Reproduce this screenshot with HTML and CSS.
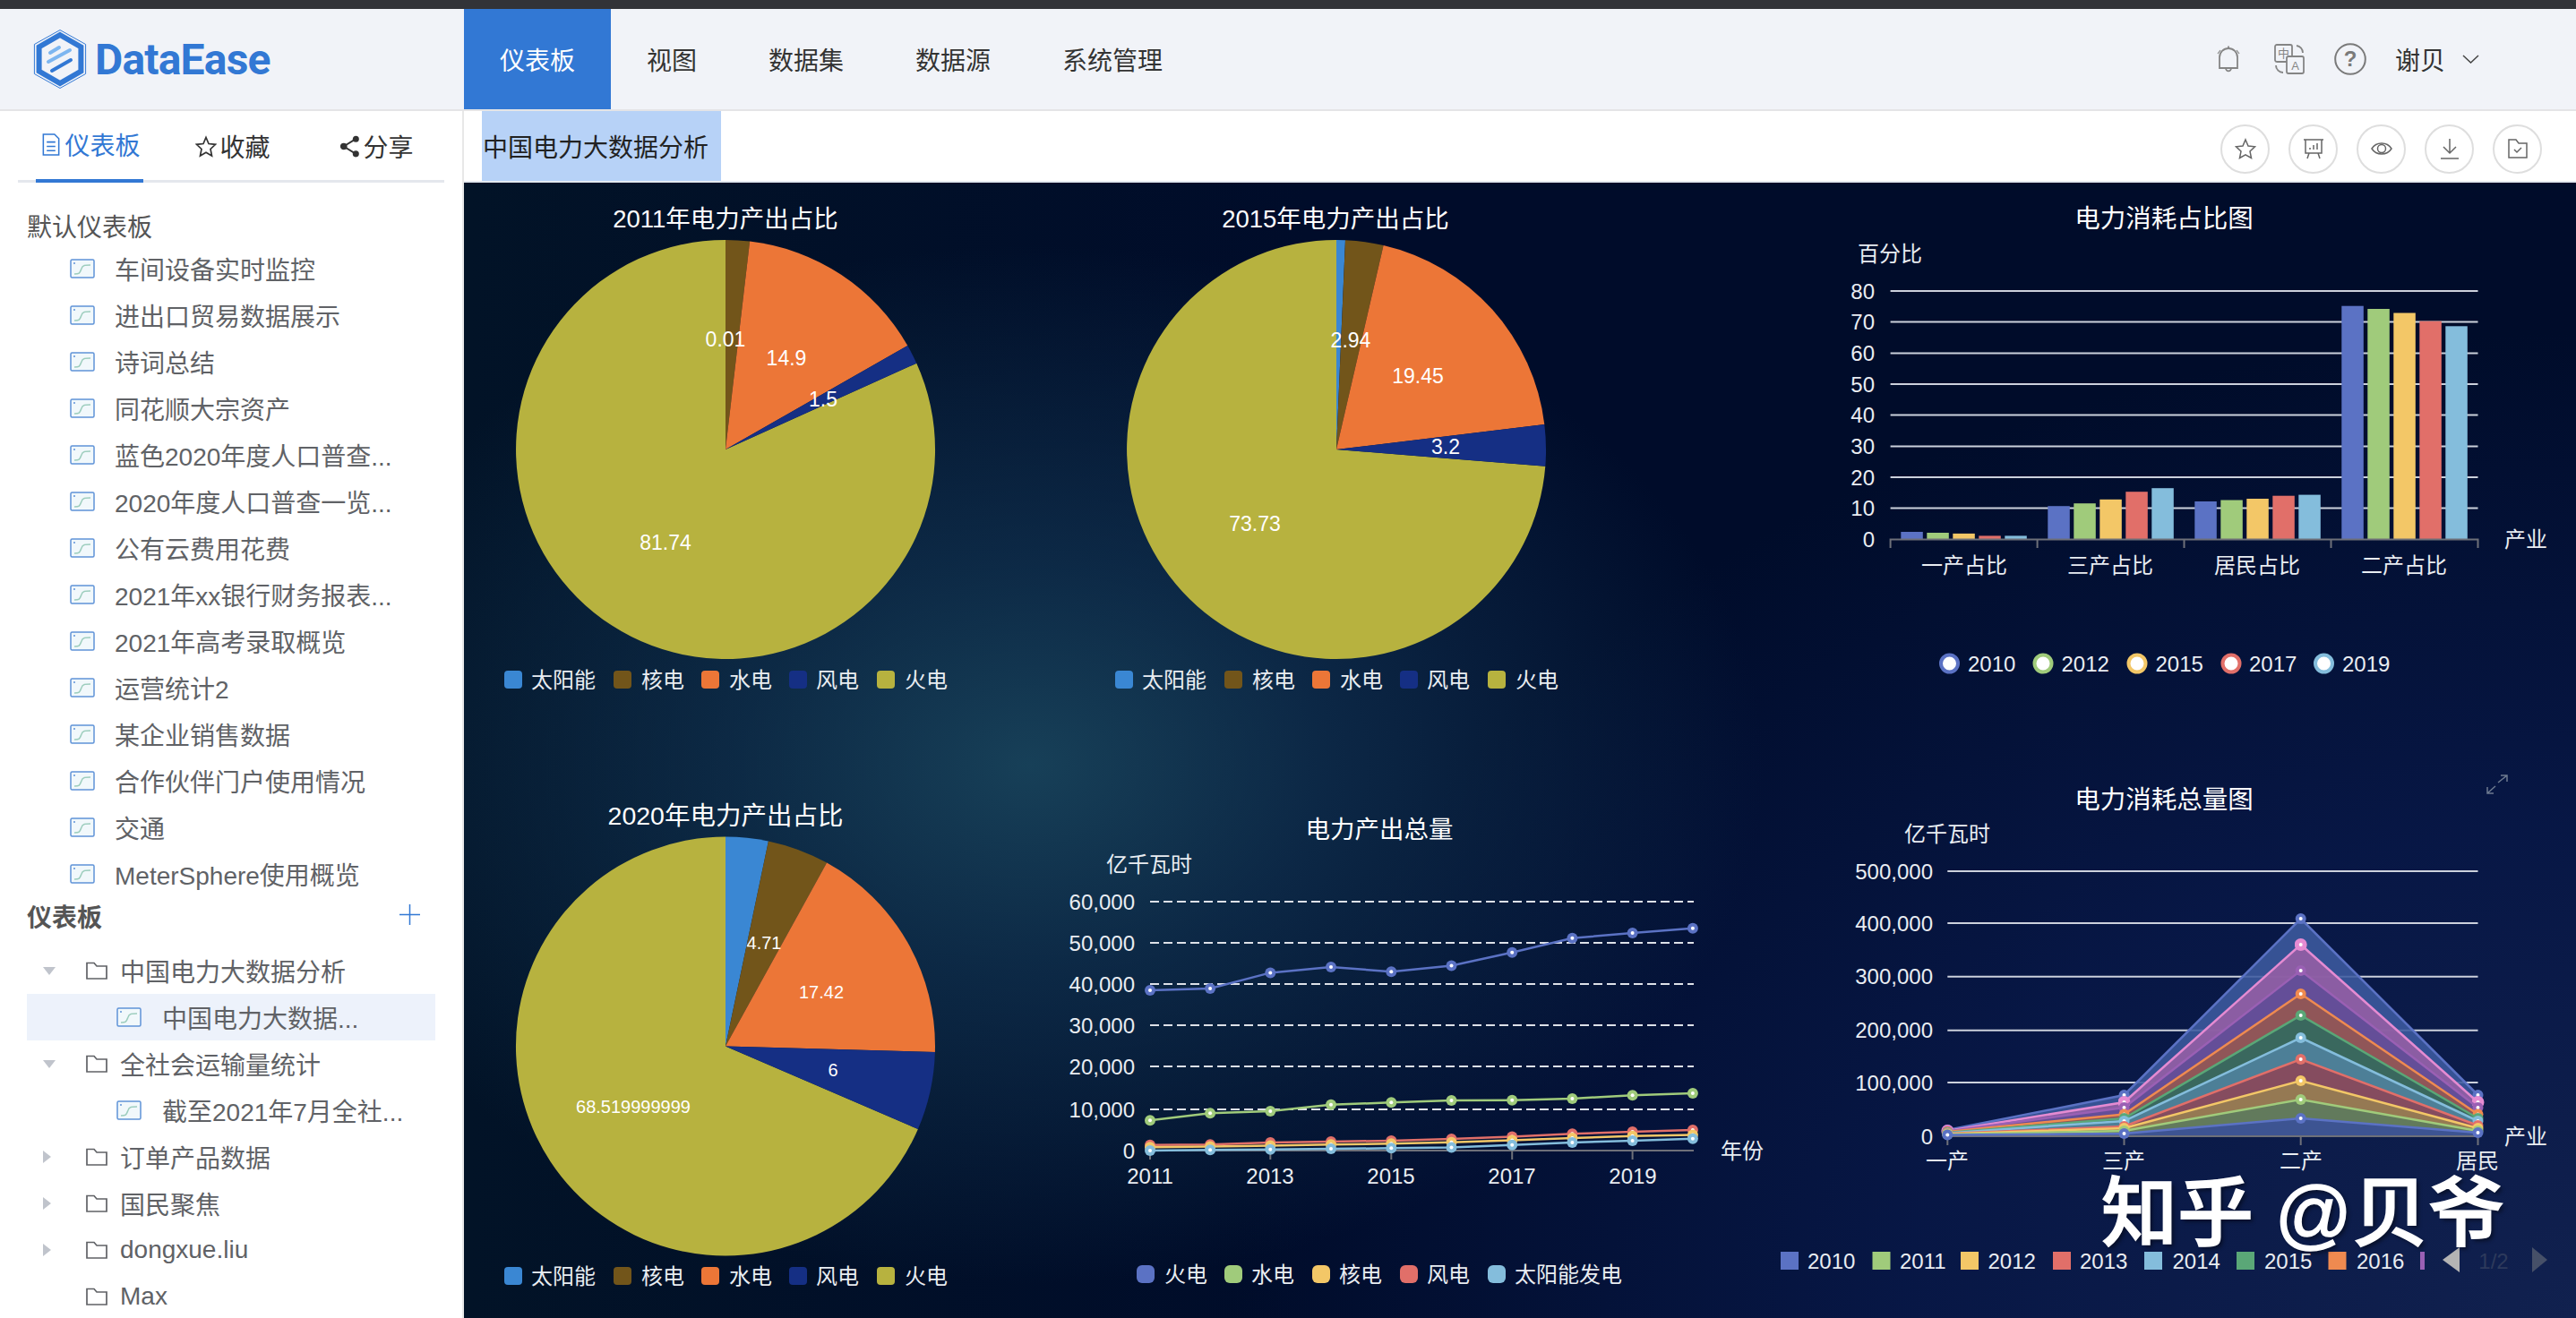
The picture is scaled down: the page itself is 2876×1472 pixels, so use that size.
FILE: index.html
```html
<!DOCTYPE html>
<html>
	<head>
		<title>DataEase</title>
		<meta charset="UTF-8">
		<link rel="stylesheet" href="styles.css">
	</head>
	<body>
		<!-- shared icons -->
		<svg class="defs">
			<symbol id="i-chart" viewBox="0 0 28 22">
				<rect x="1" y="1" width="26" height="20" rx="1.5" fill="#f1f8fb" stroke="#5f93d8" stroke-width="1.5"/>
				<path d="M5 17 C11 17 11 16 13 11 C14 7 17 7 23 7" fill="none" stroke="#9ccdbd" stroke-width="1.5"/>
				<circle cx="5" cy="5" r="1" fill="#5f93d8"/>
			</symbol>
			<symbol id="i-folder" viewBox="0 0 24 20">
				<path d="M1 19 V1.5 H9 L12 5 H23 V19 Z" fill="none" stroke="#606266" stroke-width="1.7"/>
			</symbol>
			<marker id="m-blue" class="pt" viewBox="-7 -7 14 14" markerWidth="14" markerHeight="14" markerUnits="userSpaceOnUse"><circle r="6" fill="#5b72c4"/><circle r="2" fill="#fff"/></marker>
			<marker id="m-green" viewBox="-7 -7 14 14" markerWidth="14" markerHeight="14" markerUnits="userSpaceOnUse"><circle r="6" fill="#a0cb7b"/><circle r="2" fill="#fff"/></marker>
			<marker id="m-yellow" viewBox="-7 -7 14 14" markerWidth="14" markerHeight="14" markerUnits="userSpaceOnUse"><circle r="6" fill="#f3c767"/><circle r="2" fill="#fff"/></marker>
			<marker id="m-red" viewBox="-7 -7 14 14" markerWidth="14" markerHeight="14" markerUnits="userSpaceOnUse"><circle r="6" fill="#e16f69"/><circle r="2" fill="#fff"/></marker>
			<marker id="m-sky" viewBox="-7 -7 14 14" markerWidth="14" markerHeight="14" markerUnits="userSpaceOnUse"><circle r="6" fill="#84bddc"/><circle r="2" fill="#fff"/></marker>
			<marker id="m-dgreen" viewBox="-7 -7 14 14" markerWidth="14" markerHeight="14" markerUnits="userSpaceOnUse"><circle r="6" fill="#5aa777"/><circle r="2" fill="#fff"/></marker>
			<marker id="m-orange" viewBox="-7 -7 14 14" markerWidth="14" markerHeight="14" markerUnits="userSpaceOnUse"><circle r="6" fill="#ef8a50"/><circle r="2" fill="#fff"/></marker>
			<marker id="m-purple" viewBox="-7 -7 14 14" markerWidth="14" markerHeight="14" markerUnits="userSpaceOnUse"><circle r="6" fill="#9a60b4"/><circle r="2" fill="#fff"/></marker>
			<marker id="m-pink" viewBox="-7 -7 14 14" markerWidth="14" markerHeight="14" markerUnits="userSpaceOnUse"><circle r="7" fill="#e58bd2"/><circle r="2" fill="#fff"/></marker>
		</svg>

		<div class="topstrip"></div>
		<header class="navbar">
			<div class="logo">
				<svg class="logo-mark" viewBox="0 0 60 66">
					<polygon points="30,0.5 58.6,16.5 58.6,49.5 30,65.5 1.4,49.5 1.4,16.5" fill="none" stroke="#3278d4" stroke-width="1"/>
					<polygon points="30,6 53.4,19.5 53.4,46.5 30,60 6.6,46.5 6.6,19.5" fill="none" stroke="#3278d4" stroke-width="6"/>
					<path d="M19 26 L29 20" stroke="#7db6f0" stroke-width="4" stroke-linecap="round"/>
					<path d="M17 36 L41 23" stroke="#7db6f0" stroke-width="4" stroke-linecap="round"/>
					<path d="M21 46 L42 34" stroke="#3278d4" stroke-width="4" stroke-linecap="round"/>
				</svg>
				<span class="logo-text">DataEase</span>
			</div>
			<nav class="menu">
				<a class="menu-item active">仪表板</a>
				<a class="menu-item">视图</a>
				<a class="menu-item">数据集</a>
				<a class="menu-item">数据源</a>
				<a class="menu-item">系统管理</a>
			</nav>
			<div class="nav-right">
				<svg class="ic-bell" viewBox="0 0 26 30" fill="none" stroke="#858585" stroke-width="1.8">
					<path d="M3 25 V13 a10 10 0 0 1 20 0 V25 Z"/>
					<path d="M10 25 a3 3.4 0 0 0 6 0"/>
					<path d="M13 3 V0.5"/>
					<path d="M1 9 L4 5 M25 9 L22 5" stroke-width="1.2"/>
				</svg>
				<svg class="ic-lang" viewBox="0 0 34 34" fill="none" stroke="#858585" stroke-width="1.8">
					<rect x="1" y="1" width="19" height="19" rx="2"/>
					<rect x="14" y="14" width="19" height="19" rx="2" fill="#f1f3f8"/>
					<path d="M25 2 a8 8 0 0 1 7 8 M2 24 a8 8 0 0 0 8 8"/>
					<text x="10.5" y="15" class="ic-glyph">中</text>
					<text x="23.5" y="29" class="ic-glyph">A</text>
				</svg>
				<svg class="ic-help" viewBox="0 0 36 36" fill="none" stroke="#7a7a7a" stroke-width="2">
					<circle cx="18" cy="18" r="16.8"/>
					<text x="18" y="26" class="ic-help-mark">?</text>
				</svg>
				<span class="user">谢贝</span>
				<svg class="ic-chevron" viewBox="0 0 19 10" fill="none" stroke="#444" stroke-width="1.5">
					<path d="M1 1 L9.500 9 L18 1"/>
				</svg>
			</div>
		</header>

		<div class="main">
			<aside class="sidebar">
				<div class="tabs">
					<div class="tab active">
						<svg class="tab-icon" viewBox="0 0 22 26" fill="none" stroke="#3278d4" stroke-width="1.6">
							<path d="M2 1 H15 L20 6 V25 H2 Z"/>
							<path d="M6 10 H16 M6 15 H16 M6 20 H16"/>
						</svg>
						仪表板
					</div>
					<div class="tab">
						<svg class="tab-icon" viewBox="0 0 24 24" fill="none" stroke="#333" stroke-width="1.7">
							<path d="M12 2 L15 9 L22.500 9.800 L17 15 L18.500 22.500 L12 18.800 L5.500 22.500 L7 15 L1.500 9.800 L9 9 Z"/>
						</svg>
						收藏
					</div>
					<div class="tab">
						<svg class="tab-icon" viewBox="0 0 22 24" fill="#333" stroke="#333" stroke-width="1.800">
							<path d="M18 4 L5 12 L18 20" fill="none"/>
							<circle cx="18" cy="4" r="2.500"/><circle cx="5" cy="12" r="2.800"/><circle cx="18" cy="20" r="2.500"/>
						</svg>
						分享
					</div>
				</div>

				<div class="group-title default-title">默认仪表板</div>
				<div class="row lvl1"><svg class="ic-file"><use href="#i-chart"/></svg><span>车间设备实时监控</span></div>
				<div class="row lvl1"><svg class="ic-file"><use href="#i-chart"/></svg><span>进出口贸易数据展示</span></div>
				<div class="row lvl1"><svg class="ic-file"><use href="#i-chart"/></svg><span>诗词总结</span></div>
				<div class="row lvl1"><svg class="ic-file"><use href="#i-chart"/></svg><span>同花顺大宗资产</span></div>
				<div class="row lvl1"><svg class="ic-file"><use href="#i-chart"/></svg><span>蓝色2020年度人口普查...</span></div>
				<div class="row lvl1"><svg class="ic-file"><use href="#i-chart"/></svg><span>2020年度人口普查一览...</span></div>
				<div class="row lvl1"><svg class="ic-file"><use href="#i-chart"/></svg><span>公有云费用花费</span></div>
				<div class="row lvl1"><svg class="ic-file"><use href="#i-chart"/></svg><span>2021年xx银行财务报表...</span></div>
				<div class="row lvl1"><svg class="ic-file"><use href="#i-chart"/></svg><span>2021年高考录取概览</span></div>
				<div class="row lvl1"><svg class="ic-file"><use href="#i-chart"/></svg><span>运营统计2</span></div>
				<div class="row lvl1"><svg class="ic-file"><use href="#i-chart"/></svg><span>某企业销售数据</span></div>
				<div class="row lvl1"><svg class="ic-file"><use href="#i-chart"/></svg><span>合作伙伴门户使用情况</span></div>
				<div class="row lvl1"><svg class="ic-file"><use href="#i-chart"/></svg><span>交通</span></div>
				<div class="row lvl1"><svg class="ic-file"><use href="#i-chart"/></svg><span>MeterSphere使用概览</span></div>

				<div class="group-title dash-title">
					<b>仪表板</b>
					<svg class="ic-plus" viewBox="0 0 23 23" stroke="#3278d4" stroke-width="1.5"><path d="M11.500 0 V23 M0 11.500 H23"/></svg>
				</div>
				<div class="tree">
					<div class="row folder"><i class="caret down"></i><svg class="ic-folder"><use href="#i-folder"/></svg><span>中国电力大数据分析</span></div>
					<div class="row sub selected"><svg class="ic-file"><use href="#i-chart"/></svg><span>中国电力大数据...</span></div>
					<div class="row folder"><i class="caret down"></i><svg class="ic-folder"><use href="#i-folder"/></svg><span>全社会运输量统计</span></div>
					<div class="row sub"><svg class="ic-file"><use href="#i-chart"/></svg><span>截至2021年7月全社...</span></div>
					<div class="row folder"><i class="caret"></i><svg class="ic-folder"><use href="#i-folder"/></svg><span>订单产品数据</span></div>
					<div class="row folder"><i class="caret"></i><svg class="ic-folder"><use href="#i-folder"/></svg><span>国民聚焦</span></div>
					<div class="row folder"><i class="caret"></i><svg class="ic-folder"><use href="#i-folder"/></svg><span>dongxue.liu</span></div>
					<div class="row folder"><i class="caret none"></i><svg class="ic-folder"><use href="#i-folder"/></svg><span>Max</span></div>
				</div>
			</aside>

			<section class="content">
				<div class="titlebar">
					<div class="title-tab">中国电力大数据分析</div>
					<div class="actions">
						<div class="action">
							<svg viewBox="0 0 24 24" fill="none" stroke="#666" stroke-width="1.500"><path d="M12 2 L15 9 L22.500 9.800 L17 15 L18.500 22.500 L12 18.800 L5.500 22.500 L7 15 L1.500 9.800 L9 9 Z"/></svg>
						</div>
						<div class="action">
							<svg viewBox="0 0 24 24" fill="none" stroke="#666" stroke-width="1.500"><path d="M1 2 H23 M3 2 V17 H21 V2 M7 17 L5 23 M17 17 L19 23"/><path d="M8 13 V11 M12 13 V8 M16 13 V6"/></svg>
						</div>
						<div class="action">
							<svg viewBox="0 0 24 24" fill="none" stroke="#666" stroke-width="1.500"><path d="M1 12 C6 4 18 4 23 12 C18 20 6 20 1 12 Z"/><circle cx="12" cy="12" r="4.500"/></svg>
						</div>
						<div class="action">
							<svg viewBox="0 0 24 24" fill="none" stroke="#666" stroke-width="1.500"><path d="M12 1 V16 M5 10 L12 17 L19 10 M2 23 H22"/></svg>
						</div>
						<div class="action">
							<svg viewBox="0 0 24 24" fill="none" stroke="#666" stroke-width="1.500"><path d="M2 22 V2 H10 L13 6 H22 V22 Z"/><path d="M8 13 L11 16 L16 11"/></svg>
						</div>
					</div>
				</div>

				<div class="dashboard">
					<!-- 2011 pie -->
					<svg class="chart" viewBox="518 204 632 636">
						<text class="c-title" x="810" y="244">2011年电力产出占比</text>
						<path fill="#b7b23f" d="M810 502 L1023.300 405.700 A234 234 0 1 1 810 268 Z"/>
						<path fill="#72551a" d="M810 502 L810 268 A234 234 0 0 1 837.100 269.600 Z"/>
						<path fill="#ec7637" d="M810 502 L837.100 269.600 A234 234 0 0 1 1013.300 386.100 Z"/>
						<path fill="#152f84" d="M810 502 L1013.300 386.100 A234 234 0 0 1 1023.300 405.700 Z"/>
						<g class="c-pielabel">
							<text x="810" y="379">0.01</text>
							<text x="878" y="400">14.9</text>
							<text x="919" y="446">1.5</text>
							<text x="743" y="606">81.74</text>
						</g>
						<g class="c-legend">
							<rect x="563" y="749" width="20" height="20" rx="4" fill="#3a87d3"/><text x="593" y="759">太阳能</text>
							<rect x="685" y="749" width="20" height="20" rx="4" fill="#72551a"/><text x="716" y="759">核电</text>
							<rect x="783" y="749" width="20" height="20" rx="4" fill="#ec7637"/><text x="814" y="759">水电</text>
							<rect x="881" y="749" width="20" height="20" rx="4" fill="#152f84"/><text x="911" y="759">风电</text>
							<rect x="979" y="749" width="20" height="20" rx="4" fill="#b7b23f"/><text x="1010" y="759">火电</text>
						</g>
					</svg>

					<!-- 2015 pie -->
					<svg class="chart" viewBox="1150 204 830 636">
						<text class="c-title" x="1491" y="244">2015年电力产出占比</text>
						<path fill="#b7b23f" d="M1492 502 L1725.300 520.800 A234 234 0 1 1 1492 268 Z"/>
						<path fill="#3a87d3" d="M1492 502 L1492 268 A234 234 0 0 1 1502 268.200 Z"/>
						<path fill="#72551a" d="M1492 502 L1502 268.200 A234 234 0 0 1 1544.600 274 Z"/>
						<path fill="#ec7637" d="M1492 502 L1544.600 274 A234 234 0 0 1 1724.300 473.900 Z"/>
						<path fill="#152f84" d="M1492 502 L1724.300 473.900 A234 234 0 0 1 1725.300 520.800 Z"/>
						<g class="c-pielabel">
							<text x="1508" y="380">2.94</text>
							<text x="1583" y="420">19.45</text>
							<text x="1614" y="499">3.2</text>
							<text x="1401" y="585">73.73</text>
						</g>
						<g class="c-legend">
							<rect x="1245" y="749" width="20" height="20" rx="4" fill="#3a87d3"/><text x="1275" y="759">太阳能</text>
							<rect x="1367" y="749" width="20" height="20" rx="4" fill="#72551a"/><text x="1398" y="759">核电</text>
							<rect x="1465" y="749" width="20" height="20" rx="4" fill="#ec7637"/><text x="1496" y="759">水电</text>
							<rect x="1563" y="749" width="20" height="20" rx="4" fill="#152f84"/><text x="1593" y="759">风电</text>
							<rect x="1661" y="749" width="20" height="20" rx="4" fill="#b7b23f"/><text x="1692" y="759">火电</text>
						</g>
					</svg>

					<!-- consumption share bars -->
					<svg class="chart" viewBox="1980 204 896 636">
						<text class="c-title big" x="2416" y="244">电力消耗占比图</text>
						<text class="c-axis mid" x="2110" y="283">百分比</text>
						<g class="c-grid">
							<path d="M2110.600 325 H2766.500 M2110.600 359.500 H2766.500 M2110.600 394.500 H2766.500 M2110.600 429 H2766.500 M2110.600 463.500 H2766.500 M2110.600 498.500 H2766.500 M2110.600 533 H2766.500 M2110.600 567.500 H2766.500"/>
						</g>
						<g class="c-axis end">
							<text x="2093" y="325">80</text><text x="2093" y="359.500">70</text><text x="2093" y="394.500">60</text><text x="2093" y="429">50</text>
							<text x="2093" y="463.500">40</text><text x="2093" y="498.500">30</text><text x="2093" y="533">20</text><text x="2093" y="567.500">10</text><text x="2093" y="602">0</text>
						</g>
						<g fill="#5b72c4">
							<rect x="2122.300" y="594" width="24.500" height="8.500"/><rect x="2286.300" y="565.200" width="24.500" height="37.300"/><rect x="2450.300" y="560" width="24.500" height="42.500"/><rect x="2614.300" y="341.700" width="24.500" height="260.800"/>
						</g>
						<g fill="#a0cb7b">
							<rect x="2151.300" y="595" width="24.500" height="7.500"/><rect x="2315.300" y="562.200" width="24.500" height="40.300"/><rect x="2479.300" y="558.500" width="24.500" height="44"/><rect x="2643.300" y="345" width="24.500" height="257.500"/>
						</g>
						<g fill="#f3c767">
							<rect x="2180.300" y="595.900" width="24.500" height="6.600"/><rect x="2344.300" y="557.800" width="24.500" height="44.700"/><rect x="2508.300" y="557" width="24.500" height="45.500"/><rect x="2672.300" y="349.500" width="24.500" height="253"/>
						</g>
						<g fill="#e16f69">
							<rect x="2209.300" y="598.400" width="24.500" height="4.100"/><rect x="2373.300" y="549.200" width="24.500" height="53.300"/><rect x="2537.300" y="553.700" width="24.500" height="48.800"/><rect x="2701.300" y="358.700" width="24.500" height="243.800"/>
						</g>
						<g fill="#84bddc">
							<rect x="2238.300" y="598.400" width="24.500" height="4.100"/><rect x="2402.300" y="545.200" width="24.500" height="57.300"/><rect x="2566.300" y="552.600" width="24.500" height="49.900"/><rect x="2730.300" y="364.300" width="24.500" height="238.200"/>
						</g>
						<path class="c-line" d="M2110.600 612 V602.500 H2766.500 V612 M2274.600 602.500 V612 M2438.500 602.500 V612 M2602.500 602.500 V612"/>
						<g class="c-axis mid">
							<text x="2193" y="631">一产占比</text><text x="2356" y="631">三产占比</text><text x="2520" y="631">居民占比</text><text x="2684" y="631">二产占比</text>
						</g>
						<text class="c-axis" x="2796" y="602">产业</text>
						<g class="c-ring">
							<circle cx="2176.500" cy="741" r="9.500" stroke="#5b72c4"/>
							<circle cx="2281" cy="741" r="9.500" stroke="#a0cb7b"/>
							<circle cx="2386" cy="741" r="9.500" stroke="#f3c767"/>
							<circle cx="2491" cy="741" r="9.500" stroke="#e16f69"/>
							<circle cx="2594.500" cy="741" r="9.500" stroke="#84bddc"/>
						</g>
						<g class="c-legend">
							<text x="2197" y="741">2010</text><text x="2301.500" y="741">2012</text><text x="2406.500" y="741">2015</text><text x="2511" y="741">2017</text><text x="2615" y="741">2019</text>
						</g>
					</svg>

					<!-- 2020 pie -->
					<svg class="chart" viewBox="518 840 632 632">
						<text class="c-title big" x="810" y="911">2020年电力产出占比</text>
						<path fill="#b7b23f" d="M810 1168.500 L1024.900 1261 A234 234 0 1 1 810 934.500 Z"/>
						<path fill="#3a87d3" d="M810 1168.500 L810 934.500 A234 234 0 0 1 857.900 939.400 Z"/>
						<path fill="#72551a" d="M810 1168.500 L857.900 939.400 A234 234 0 0 1 923.100 963.600 Z"/>
						<path fill="#ec7637" d="M810 1168.500 L923.100 963.600 A234 234 0 0 1 1043.900 1175 Z"/>
						<path fill="#152f84" d="M810 1168.500 L1043.900 1175 A234 234 0 0 1 1024.900 1261 Z"/>
						<g class="c-pielabel small">
							<text x="853" y="1053">4.71</text>
							<text x="917" y="1108">17.42</text>
							<text x="930" y="1195">6</text>
							<text x="707" y="1236">68.519999999</text>
						</g>
						<g class="c-legend">
							<rect x="563" y="1415" width="20" height="20" rx="4" fill="#3a87d3"/><text x="593" y="1425">太阳能</text>
							<rect x="685" y="1415" width="20" height="20" rx="4" fill="#72551a"/><text x="716" y="1425">核电</text>
							<rect x="783" y="1415" width="20" height="20" rx="4" fill="#ec7637"/><text x="814" y="1425">水电</text>
							<rect x="881" y="1415" width="20" height="20" rx="4" fill="#152f84"/><text x="911" y="1425">风电</text>
							<rect x="979" y="1415" width="20" height="20" rx="4" fill="#b7b23f"/><text x="1010" y="1425">火电</text>
						</g>
					</svg>

					<!-- generation total lines -->
					<svg class="chart" viewBox="1150 840 830 632">
						<text class="c-title" x="1540" y="926">电力产出总量</text>
						<text class="c-axis mid" x="1283" y="965">亿千瓦时</text>
						<path class="c-dash" d="M1284 1007 H1891 M1284 1053 H1891 M1284 1099 H1891 M1284 1145 H1891 M1284 1191 H1891 M1284 1239 H1891"/>
						<g class="c-axis end">
							<text x="1267" y="1007">60,000</text><text x="1267" y="1053">50,000</text><text x="1267" y="1099">40,000</text><text x="1267" y="1145">30,000</text>
							<text x="1267" y="1191">20,000</text><text x="1267" y="1239">10,000</text><text x="1267" y="1285">0</text>
						</g>
						<path class="c-line" d="M1284 1295 V1285 H1891 M1418.300 1285 V1295 M1553.300 1285 V1295 M1688.200 1285 V1295 M1822.600 1285 V1295"/>
						<polyline class="s s-blue" points="1284,1106.100 1351.100,1103.900 1418.300,1086.400 1486,1079.900 1553.300,1085.300 1620.500,1078.400 1688.200,1063.800 1755.400,1047.800 1822.600,1041.900 1889.900,1036.800"/>
						<polyline class="s s-green" points="1284,1251.300 1351.100,1243.300 1418.300,1241.100 1486,1233.800 1553.300,1231.300 1620.500,1229.100 1688.200,1228.700 1755.400,1226.900 1822.600,1223.200 1889.900,1221"/>
						<polyline class="s s-red" points="1284,1278.700 1351.100,1278.300 1418.300,1276.100 1486,1275 1553.300,1273.900 1620.500,1272.100 1688.200,1269.600 1755.400,1266.300 1822.600,1264.100 1889.900,1261.900"/>
						<polyline class="s s-yellow" points="1284,1281.200 1351.100,1280.500 1418.300,1279.400 1486,1278.300 1553.300,1277.200 1620.500,1275.800 1688.200,1273.600 1755.400,1271 1822.600,1268.800 1889.900,1267.400"/>
						<polyline class="s s-sky" points="1284,1284.900 1351.100,1284.200 1418.300,1283.800 1486,1283.100 1553.300,1282.300 1620.500,1281.600 1688.200,1278.700 1755.400,1276.100 1822.600,1273.900 1889.900,1271.800"/>
						<g class="c-axis mid">
							<text x="1284" y="1313">2011</text><text x="1418" y="1313">2013</text><text x="1553" y="1313">2015</text><text x="1688" y="1313">2017</text><text x="1823" y="1313">2019</text>
						</g>
						<text class="c-axis" x="1921" y="1285">年份</text>
						<g class="c-legend">
							<rect x="1269" y="1413" width="20" height="20" rx="6" fill="#5b72c4"/><text x="1300" y="1423">火电</text>
							<rect x="1367" y="1413" width="20" height="20" rx="6" fill="#a0cb7b"/><text x="1397" y="1423">水电</text>
							<rect x="1465" y="1413" width="20" height="20" rx="6" fill="#f3c767"/><text x="1495" y="1423">核电</text>
							<rect x="1563" y="1413" width="20" height="20" rx="6" fill="#e16f69"/><text x="1593" y="1423">风电</text>
							<rect x="1661" y="1413" width="20" height="20" rx="6" fill="#84bddc"/><text x="1691" y="1423">太阳能发电</text>
						</g>
					</svg>

					<!-- consumption total areas -->
					<svg class="chart" viewBox="1980 840 896 632">
						<text class="c-title big" x="2416" y="893">电力消耗总量图</text>
						<text class="c-axis mid" x="2174" y="931">亿千瓦时</text>
						<path class="c-grid" d="M2174.300 973 H2766.500 M2174.300 1031 H2766.500 M2174.300 1090.700 H2766.500 M2174.300 1150.800 H2766.500 M2174.300 1209 H2766.500"/>
						<g class="c-axis end">
							<text x="2158" y="973">500,000</text><text x="2158" y="1031">400,000</text><text x="2158" y="1090.700">300,000</text><text x="2158" y="1150.800">200,000</text><text x="2158" y="1209">100,000</text><text x="2158" y="1269">0</text>
						</g>
						<g class="c-area">
							<polygon fill="#3c5a9f" points="2174.300,1262 2371.500,1223 2568.700,1026 2766.500,1223 2766.500,1269 2174.300,1269"/>
							<polygon fill="#975fa5" points="2174.300,1263 2371.500,1231 2568.700,1055 2766.500,1231 2766.500,1269 2174.300,1269"/>
							<polygon fill="#5e4c96" points="2174.300,1263.500 2371.500,1237 2568.700,1084 2766.500,1237 2766.500,1269 2174.300,1269"/>
							<polygon fill="#96584f" points="2174.300,1264 2371.500,1244.500 2568.700,1110 2766.500,1244.500 2766.500,1269 2174.300,1269"/>
							<polygon fill="#2e6b5e" points="2174.300,1265 2371.500,1249 2568.700,1134 2766.500,1249 2766.500,1269 2174.300,1269"/>
							<polygon fill="#50829f" points="2174.300,1265.500 2371.500,1252 2568.700,1159 2766.500,1252 2766.500,1269 2174.300,1269"/>
							<polygon fill="#8d4558" points="2174.300,1266 2371.500,1258 2568.700,1183 2766.500,1257 2766.500,1269 2174.300,1269"/>
							<polygon fill="#977f52" points="2174.300,1266.500 2371.500,1260 2568.700,1207 2766.500,1260 2766.500,1269 2174.300,1269"/>
							<polygon fill="#5b7a5d" points="2174.300,1267 2371.500,1263 2568.700,1228 2766.500,1263 2766.500,1269 2174.300,1269"/>
							<polygon fill="#384f9a" points="2174.300,1267.500 2371.500,1266 2568.700,1249 2766.500,1265 2766.500,1269 2174.300,1269"/>
						</g>
						<path class="c-line" d="M2174.300 1279 V1269 H2766.500 V1279 M2371.500 1269 V1279 M2568.700 1269 V1279"/>
						<polyline class="s s-blue" points="2174.300,1262 2371.500,1223 2568.700,1026 2766.500,1223"/>
						<polyline class="s s-pink" points="2174.300,1263 2371.500,1231 2568.700,1055 2766.500,1231"/>
						<polyline class="s s-purple" points="2174.300,1263.500 2371.500,1237 2568.700,1084 2766.500,1237"/>
						<polyline class="s s-orange" points="2174.300,1264 2371.500,1244.500 2568.700,1110 2766.500,1244.500"/>
						<polyline class="s s-dgreen" points="2174.300,1265 2371.500,1249 2568.700,1134 2766.500,1249"/>
						<polyline class="s s-sky" points="2174.300,1265.500 2371.500,1252 2568.700,1159 2766.500,1252"/>
						<polyline class="s s-red" points="2174.300,1266 2371.500,1258 2568.700,1183 2766.500,1257"/>
						<polyline class="s s-yellow" points="2174.300,1266.500 2371.500,1260 2568.700,1207 2766.500,1260"/>
						<polyline class="s s-green" points="2174.300,1267 2371.500,1263 2568.700,1228 2766.500,1263"/>
						<polyline class="s s-blue" points="2174.300,1267.500 2371.500,1266 2568.700,1249 2766.500,1265"/>
						<g class="c-axis mid">
							<text x="2174" y="1296">一产</text><text x="2371" y="1296">三产</text><text x="2569" y="1296">二产</text><text x="2766" y="1296">居民</text>
						</g>
						<text class="c-axis" x="2796" y="1269">产业</text>
						<g class="c-legend">
							<rect x="1988" y="1398" width="20" height="20" fill="#5b72c4"/><text x="2018" y="1408">2010</text>
							<rect x="2090.500" y="1398" width="20" height="20" fill="#a0cb7b"/><text x="2121" y="1408">2011</text>
							<rect x="2189" y="1398" width="20" height="20" fill="#f3c767"/><text x="2219.500" y="1408">2012</text>
							<rect x="2292" y="1398" width="20" height="20" fill="#e16f69"/><text x="2322" y="1408">2013</text>
							<rect x="2394" y="1398" width="20" height="20" fill="#84bddc"/><text x="2425.500" y="1408">2014</text>
							<rect x="2497" y="1398" width="20" height="20" fill="#5aa777"/><text x="2528" y="1408">2015</text>
							<rect x="2599.500" y="1398" width="20" height="20" fill="#ef8a50"/><text x="2631" y="1408">2016</text>
							<rect x="2702" y="1398" width="5" height="20" fill="#9a60b4"/>
						</g>
						<polygon fill="#b4b4b4" points="2746,1393 2746,1421 2727,1407"/>
						<text class="c-pager" x="2784" y="1408">1/2</text>
						<polygon fill="#465068" points="2827,1393 2827,1421 2844,1407"/>
						<path fill="none" stroke="#6d7a90" stroke-width="1.500" d="M2789 874 L2799 866 M2792 866 H2799 V873 M2786 878 L2777 886 M2777 879 V886 H2784"/>
					</svg>

					<div class="watermark">知乎 @贝爷</div>
				</div>
			</section>
		</div>
	</body>
</html>
```

FILE: styles.css
```css
/* Page */
html, body {
	margin: 0;
	height: 100%;
}
body {
	width: 2876px;
	height: 1472px;
	overflow: hidden;
	display: flex;
	flex-direction: column;
	background: #fff;
	font-family: "Liberation Sans", "Noto Sans CJK SC", sans-serif;
	font-size: 28px;
	color: #606266;
}
.defs {
	width: 0;
	height: 0;
	position: absolute;
}
.topstrip {
	height: 10px;
	background: #323338;
	flex: none;
}

/* Navbar */
.navbar {
	height: 112px;
	flex: none;
	display: flex;
	align-items: stretch;
	background: #f1f3f8;
	border-bottom: 2px solid #e4e4e6;
}
.logo {
	width: 518px;
	flex: none;
	display: flex;
	align-items: center;
	padding-left: 37px;
	box-sizing: border-box;
}
.logo-mark {
	width: 60px;
	height: 66px;
	flex: none;
}
.logo-text {
	margin-left: 9px;
	font-family: Roboto, sans-serif;
	font-weight: 700;
	font-size: 48px;
	letter-spacing: -0.8px;
	color: #3278d4;
}
.menu {
	display: flex;
}
.menu-item {
	padding: 0 40px;
	display: flex;
	align-items: center;
	color: #333;
}
.menu-item.active {
	background: #3278d4;
	color: #fff;
}
.nav-right {
	margin-left: auto;
	display: flex;
	align-items: center;
	padding-right: 108px;
}
.ic-bell {
	width: 26px;
	height: 30px;
}
.ic-lang {
	width: 34px;
	height: 34px;
	margin-left: 38px;
}
.ic-glyph {
	font-size: 13px;
	fill: #858585;
	stroke: none;
	text-anchor: middle;
}
.ic-help {
	width: 36px;
	height: 36px;
	margin-left: 33px;
}
.ic-help-mark {
	font-size: 24px;
	font-weight: 700;
	fill: #7a7a7a;
	stroke: none;
	text-anchor: middle;
}
.user {
	margin-left: 32px;
	color: #333;
}
.ic-chevron {
	width: 19px;
	height: 10px;
	margin-left: 19px;
}

/* Main area */
.main {
	flex: 1;
	display: flex;
	min-height: 0;
}

/* Sidebar */
.sidebar {
	width: 518px;
	flex: none;
	box-sizing: border-box;
	border-right: 2px solid #e8e8e8;
}
.tabs {
	height: 80px;
	box-sizing: border-box;
	margin: 0 20px;
	padding-left: 20px;
	display: flex;
	gap: 40px;
	border-bottom: 3px solid #e4e7ed;
}
.tab {
	width: 120px;
	height: 80px;
	box-sizing: border-box;
	display: flex;
	align-items: center;
	justify-content: center;
	gap: 3px;
	padding-bottom: 2px;
	color: #333;
}
.tab.active {
	color: #3278d4;
	border-bottom: 4px solid #3278d4;
	padding-left: 2px;
}
.tab-icon {
	width: 24px;
	height: 25px;
}
.group-title {
	padding-left: 30px;
	color: #555;
}
.default-title {
	height: 38px;
	margin-top: 32px;
	line-height: 38px;
}
.dash-title {
	height: 42px;
	display: flex;
	align-items: center;
	justify-content: space-between;
	padding-right: 47px;
	margin-bottom: 14px;
}
.ic-plus {
	width: 23px;
	height: 23px;
	margin-top: -3px;
}
.row {
	height: 52px;
	display: flex;
	align-items: center;
	white-space: nowrap;
}
.lvl1 {
	padding-left: 78px;
}
.ic-file {
	width: 28px;
	height: 22px;
	flex: none;
}
.lvl1 .ic-file {
	margin-right: 22px;
}
.folder {
	padding-left: 48px;
}
.caret {
	width: 14px;
	height: 14px;
	flex: none;
	margin-right: 34px;
	box-sizing: border-box;
	border-left: 9px solid #c0c4cc;
	border-top: 7px solid transparent;
	border-bottom: 7px solid transparent;
}
.caret.down {
	border-top: 9px solid #c0c4cc;
	border-left: 7px solid transparent;
	border-right: 7px solid transparent;
	border-bottom: 0;
	height: 9px;
}
.caret.none {
	border-color: transparent;
}
.ic-folder {
	width: 24px;
	height: 20px;
	flex: none;
	margin-right: 14px;
}
.sub {
	margin: 0 30px;
	padding-left: 100px;
}
.sub .ic-file {
	margin-right: 23px;
}
.selected {
	background: #edf2fb;
}

/* Title bar */
.content {
	flex: 1;
	display: flex;
	flex-direction: column;
	min-width: 0;
}
.titlebar {
	height: 80px;
	flex: none;
	display: flex;
	justify-content: space-between;
	padding-left: 20px;
	box-sizing: border-box;
	background: #fff;
	border-bottom: 2px solid #e4e9f0;
}
.title-tab {
	width: 267px;
	box-sizing: border-box;
	padding-left: 1px;
	display: flex;
	align-items: center;
	background: #b7d2f7;
	color: #222;
	white-space: nowrap;
}
.actions {
	display: flex;
	align-items: center;
	gap: 21px;
	padding: 6px 38px 0 0;
}
.action {
	width: 55px;
	height: 55px;
	box-sizing: border-box;
	border: 2px solid #dedede;
	border-radius: 50%;
	display: flex;
	align-items: center;
	justify-content: center;
}
.action svg {
	width: 24px;
	height: 24px;
}

/* Dashboard canvas */
.dashboard {
	position: relative;
	flex: 1;
	display: grid;
	grid-template-columns: 632px 830px 896px;
	grid-template-rows: 636px 632px;
	background:
		radial-gradient(ellipse 820px 580px at 632px 650px, rgba(25, 68, 92, 0.92) 0, rgba(20, 58, 88, 0.6) 40%, transparent 100%),
		radial-gradient(ellipse 1500px 1100px at 100% 100%, #11214f 0, rgba(8, 24, 72, 0.9) 50%, transparent 100%),
		linear-gradient(90deg, #021327 0, #000c2a 40%);
}
.chart {
	display: block;
	width: 100%;
	height: 100%;
	overflow: visible;
}
.chart text {
	dominant-baseline: central;
}
.c-title {
	font-size: 27.5px;
	fill: #fff;
	text-anchor: middle;
}
.c-title.big {
	font-size: 28.5px;
}
.c-pielabel text {
	font-size: 23px;
	fill: #fff;
	text-anchor: middle;
}
.c-pielabel.small text {
	font-size: 20px;
}
.c-legend text {
	font-size: 24px;
	fill: #e9edf2;
}
.c-axis, .c-axis text {
	font-size: 24px;
	fill: #e9edf2;
}
.c-axis.mid text, text.c-axis.mid {
	text-anchor: middle;
}
.c-axis.end text {
	text-anchor: end;
}
.c-grid path, path.c-grid {
	stroke: #ccd1dc;
	stroke-width: 2;
	fill: none;
}
.c-dash {
	stroke: #dde1e8;
	stroke-width: 2;
	stroke-dasharray: 10 5;
	fill: none;
}
.c-line {
	stroke: #6e7079;
	stroke-width: 2;
	fill: none;
}
.c-ring circle {
	fill: #fff;
	stroke-width: 4;
}
.c-area polygon {
	fill-opacity: 0.88;
}
.c-pager {
	font-size: 24px;
	fill: #2d3a5c;
	text-anchor: middle;
}

/* Chart series */
.s {
	fill: none;
	stroke-width: 2.500;
}
.s-blue { stroke: #5b72c4; marker: url(#m-blue); }
.s-green { stroke: #a0cb7b; marker: url(#m-green); }
.s-yellow { stroke: #f3c767; marker: url(#m-yellow); }
.s-red { stroke: #e16f69; marker: url(#m-red); }
.s-sky { stroke: #84bddc; marker: url(#m-sky); }
.s-dgreen { stroke: #5aa777; marker: url(#m-dgreen); }
.s-orange { stroke: #ef8a50; marker: url(#m-orange); }
.s-purple { stroke: #9a60b4; marker: url(#m-purple); }
.s-pink { stroke: #e58bd2; marker: url(#m-pink); }

/* Watermark */
.watermark {
	position: absolute;
	right: 80px;
	bottom: 74px;
	font-size: 85px;
	line-height: 1;
	font-weight: 500;
	color: #fff;
	white-space: nowrap;
	-webkit-text-stroke: 1.5px #fff;
	text-shadow: 3px 3px 4px rgba(0, 0, 0, 0.45);
}
```
